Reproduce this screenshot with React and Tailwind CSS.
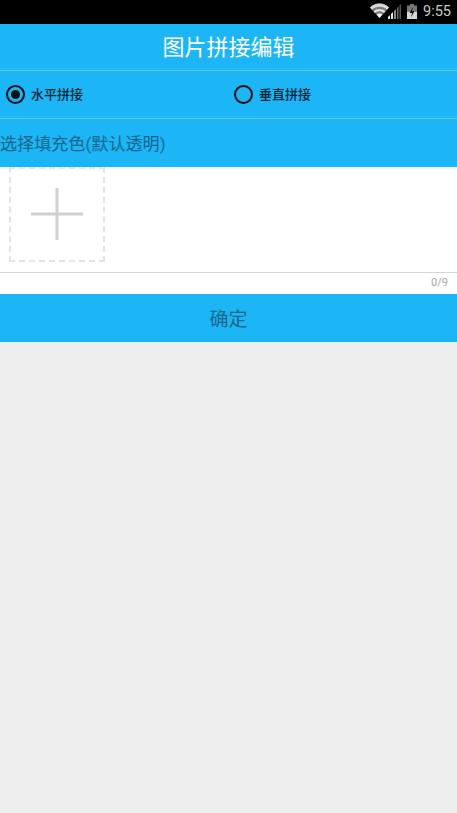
import React from 'react';

const cjk = { fontFamily: '"Roboto", "Noto Sans CJK SC", sans-serif' };

const StatusBar = () => (
  <div className="h-6 bg-black flex items-center justify-end pr-[6px]">
    {/* wifi */}
    <svg width="19" height="15" viewBox="0 0 19 15" className="mt-[-3px]">
      <path d="M0 4.5 C5 -0.7 14 -0.7 19 4.5 L9.5 15 Z" fill="#7a7a7a" />
      <path d="M0 4.5 C5 -0.7 14 -0.7 19 4.5 L17 6.7 C13 2.9 6 2.9 2 6.7 Z" fill="#d8d8d8" />
      <path d="M3.5 8.4 C7 5.2 12 5.2 15.5 8.4 L14 10 C11.5 7.8 7.5 7.8 5 10 Z" fill="#e0e0e0" />
      <path d="M6.5 11.6 C8.3 10.2 10.7 10.2 12.5 11.6 L9.5 15 Z" fill="#f4f4f4" />
    </svg>
    {/* signal */}
    <svg width="13" height="15" viewBox="0 0 13 15" className="ml-[-1px] mt-[-2px]">
      <path d="M0 15 V13 L2 11 V15 Z" fill="#f0f0f0" />
      <path d="M3 15 V10 L5 8 V15 Z" fill="#e8e8e8" />
      <path d="M6 15 V7 L8 5 V15 Z" fill="#8c8c8c" />
      <path d="M9 15 V4 L10.5 2.5 V15 Z" fill="#6a6a6a" />
      <path d="M11.5 15 V1.5 L13 0 V15 Z" fill="#555555" />
    </svg>
    {/* battery */}
    <svg width="10" height="15" viewBox="0 0 10 15" className="ml-[6px] mt-[-2px]">
      <rect x="3" y="0" width="4" height="2" fill="#777777" />
      <rect x="0" y="1.5" width="10" height="6" fill="#777777" />
      <rect x="0" y="7.5" width="10" height="7.5" fill="#d8d8d8" />
      <path d="M6 3 L2.5 9 H5 L4 13.5 L7.5 7 H5 Z" fill="#111111" />
    </svg>
    <span className="ml-[6px] text-[14.5px] leading-none text-[#c8c8c8]" style={{ fontFamily: 'Roboto, sans-serif' }}>9:55</span>
  </div>
);

const Radio = ({ checked, label, className }) => (
  <div className={`flex items-center ${className}`}>
    <div className="w-[19px] h-[19px] rounded-full border-2 border-[#0b0f14] flex items-center justify-center">
      {checked && <div className="w-[9px] h-[9px] rounded-full bg-[#0b0f14]" />}
    </div>
    <span className="ml-[6px] text-[13px] font-medium leading-none text-[#0b2533]">{label}</span>
  </div>
);

export default function App() {
  return (
    <div className="min-h-screen bg-[#eeeeee] flex flex-col" style={cjk}>
      <StatusBar />
      <div className="h-[46px] bg-[#1cb5f6] flex items-center justify-center text-white text-[22px]">
        图片拼接编辑
      </div>
      <div className="h-[49px] bg-[#1cb5f6] border-t border-b border-[#5cc9f8] flex items-center pl-[6px]">
        <Radio checked label="水平拼接" className="w-[228px]" />
        <Radio label="垂直拼接" />
      </div>
      <div className="h-[48px] pt-[4px] bg-[#1cb5f6] flex items-center text-[17.1px] text-[#17668c]">
        选择填充色(默认透明)
      </div>
      <div className="h-[106px] bg-white border-b border-[#d6d6d6] pl-[9px]">
        <div className="w-[96px] h-[95px] border-2 border-dashed border-[#e4e4e4] flex items-center justify-center">
          <svg width="52" height="52" viewBox="0 0 52 52" className="mb-px">
            <rect x="0" y="24.5" width="52" height="3" fill="#d0d0d0" />
            <rect x="24.5" y="0" width="3" height="52" fill="#d0d0d0" />
          </svg>
        </div>
      </div>
      <div className="h-[21px] bg-white flex items-center justify-end pr-[9px] text-[11px] text-[#a8a8a8]">
        0/9
      </div>
      <div className="h-[48px] pt-[4px] bg-[#1cb5f6] flex items-center justify-center text-[19px] text-[#17668c]">
        确定
      </div>
    </div>
  );
}
